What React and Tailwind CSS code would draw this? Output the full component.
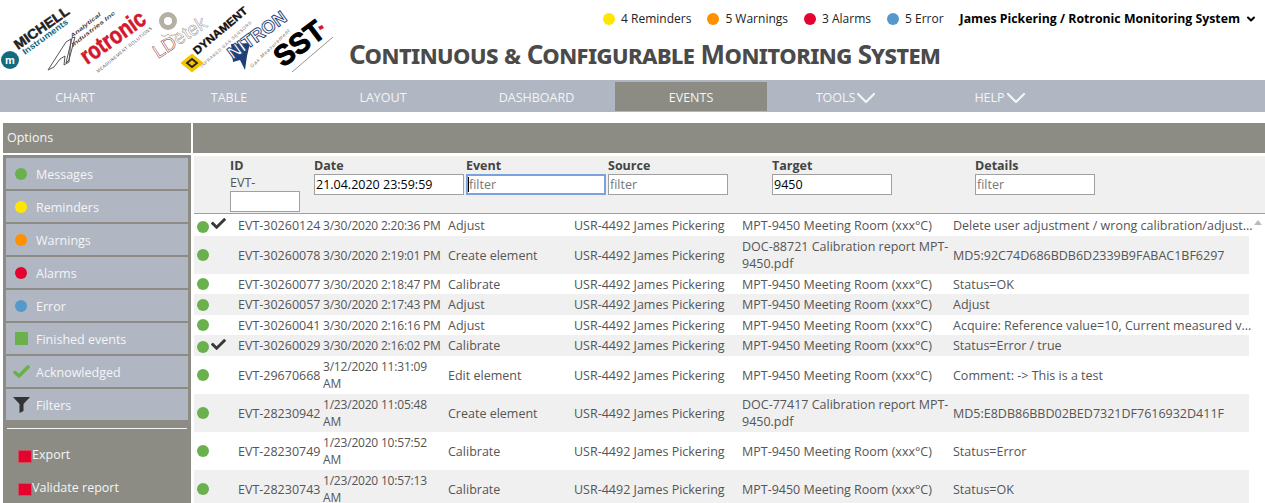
import { FaCheck } from 'react-icons/fa';
import { ChevronDown } from 'lucide-react';

const font = { fontFamily: 'Liberation Sans, sans-serif' };

const Logos = () => (
  <svg width="345" height="80" viewBox="0 0 345 80" className="shrink-0" style={font}>
    {/* Michell */}
    <circle cx="10" cy="60" r="9" fill="#136b80" />
    <text x="5" y="64" fontSize="11" fontWeight="700" fill="#fff">m</text>
    <text transform="translate(18 50) rotate(-35)" fontSize="13.5" fontWeight="900" fill="#222" stroke="#222" strokeWidth="0.5" textLength="64" lengthAdjust="spacingAndGlyphs">MICHELL</text>
    <text transform="translate(25 55) rotate(-36)" fontSize="8.5" fontWeight="700" fill="#136b80" textLength="54" lengthAdjust="spacingAndGlyphs">Instruments</text>
    {/* Analytical Industries */}
    <path d="M48 70 L66 42 L71 39 L69 62 L64 65 L65 56 L60 59 L54 67 Z M72 38 L75 37 L69 60 L66 63 Z" fill="#fff" stroke="#555" strokeWidth="1" />
    <text transform="translate(72 38) rotate(-38)" fontSize="5.5" fontWeight="700" fontStyle="italic" fill="#444" textLength="37" lengthAdjust="spacingAndGlyphs">Analytical</text>
    <text transform="translate(73 47) rotate(-38)" fontSize="5.5" fontWeight="700" fontStyle="italic" fill="#444" textLength="54" lengthAdjust="spacingAndGlyphs">Industries Inc</text>
    {/* Rotronic */}
    <text transform="translate(87 65) rotate(-35)" fontSize="24" fontWeight="700" fill="#d3172e" stroke="#d3172e" strokeWidth="0.6" textLength="74" lengthAdjust="spacingAndGlyphs">rotronic</text>
    <text transform="translate(98 73) rotate(-39)" fontSize="4.5" fill="#555" textLength="70" lengthAdjust="spacing">MEASUREMENT SOLUTIONS</text>
    {/* LDetek */}
    <circle cx="168" cy="21" r="6.5" fill="none" stroke="#b5b0a4" strokeWidth="5" />
    <path d="M161 35 q4 3 7 -1 q2 3 5 1 q3 1 5 -3" fill="none" stroke="#b5b0a4" strokeWidth="1" />
    <text transform="translate(158 59) rotate(-33)" fontSize="19" fill="none" strokeWidth="0.5" textLength="60" lengthAdjust="spacingAndGlyphs">
      <tspan stroke="#8c2b3c">LD</tspan>
      <tspan stroke="#999">etek</tspan>
    </text>
    {/* Dynament */}
    <path d="M181 63 L192 54 L203 63 L192 72 Z" fill="#f5c400" stroke="#f5c400" />
    <path d="M187 63 L192 59 L197 63 L192 67 Z" fill="none" stroke="#222" strokeWidth="1.8" />
    <text transform="translate(197 55) rotate(-40)" fontSize="11" fontWeight="700" fill="#111" stroke="#111" strokeWidth="0.35" textLength="67" lengthAdjust="spacingAndGlyphs">DYNAMENT</text>
    <text transform="translate(202 68) rotate(-42)" fontSize="4.5" fill="#777" textLength="67" lengthAdjust="spacing">INFRARED GAS SENSORS</text>
    {/* Nitron */}
    <path d="M231 44 L250 43 L247 56 L245 70 L240 60 L233 62 Z" fill="#1e3f78" />
    <text transform="translate(233 60) rotate(-36)" fontSize="18" fontWeight="700" fill="#fff" stroke="#1e3f78" strokeWidth="0.9" textLength="68" lengthAdjust="spacingAndGlyphs">NITRON</text>
    <text transform="translate(252 68) rotate(-44)" fontSize="5" fontStyle="italic" fill="#666" textLength="53" lengthAdjust="spacing">Gas Measurement</text>
    {/* SST */}
    <text transform="translate(283 68) rotate(-37)" fontSize="29" fontWeight="900" fill="#000" stroke="#000" strokeWidth="1" textLength="55" lengthAdjust="spacingAndGlyphs">SST</text>
    <path d="M318 27 L322 25 L324 28 L320 30 Z" fill="#d3172e" />
    <path d="M292 72 L333 37" stroke="#777" strokeWidth="0.8" />
  </svg>
);

const Dot = ({ color, className = '' }) => (
  <span className={`inline-block w-3 h-3 rounded-full shrink-0 ${color} ${className}`} />
);

const Status = ({ color, label }) => (
  <div className="flex items-center gap-[6px]">
    <Dot color={color} />
    <span>{label}</span>
  </div>
);

const NavItem = ({ label, width, active, menu }) => (
  <div
    className={`flex items-center justify-center pt-[3px] h-[29px] text-[12.5px] text-[#f4f5f6] ${width} ${active ? 'bg-[#8c8c84]' : ''}`}
  >
    {label}
    {menu && <ChevronDown size={32} strokeWidth={1.6} className="-my-2 -ml-[5px] -mr-2" />}
  </div>
);

const SideButton = ({ icon, label }) => (
  <div className="flex items-center h-[31px] bg-[#b0b7c3] text-[12.5px] text-[#f4f5f6] mb-[2px]">
    <span className="flex justify-center w-[30px] shrink-0 pl-[6px] pr-[6px]">{icon}</span>
    <span className="pt-[3px]">{label}</span>
  </div>
);

const SideLink = ({ label }) => (
  <div className="flex items-center h-[33px] pl-[12px] text-[12.5px] text-[#f4f5f6]">
    <span className="w-[14px] h-[13px] bg-[#e4032e] border border-[#c9545f] mt-1 shrink-0" />
    <span className="pt-[1px]">{label}</span>
  </div>
);

const FilterHead = ({ width, label, children }) => (
  <div className={`shrink-0 ${width}`}>
    <div className="text-[12.5px] font-bold text-[#444] leading-[16px]">{label}</div>
    {children}
  </div>
);

const FilterInput = ({ width, value, placeholder, focus, className = '' }) => (
  <div className={`relative ${width} ${className}`}>
    <input
      readOnly
      value={value}
      placeholder={placeholder}
      className={`block w-full h-[21px] px-[1px] text-[12.5px] text-black bg-white placeholder:text-[#777] outline-none ${
        focus ? 'border-2 border-[#7aa3de]' : 'border border-[#a0a0a0]'
      }`}
    />
    {focus && <span className="absolute left-[2px] top-[3px] w-px h-[15px] bg-black" />}
  </div>
);

const rows = [
  { h: 'h-[22px]', check: true, id: 'EVT-30260124', date: '3/30/2020 2:20:36 PM', event: 'Adjust', source: 'USR-4492 James Pickering', target: 'MPT-9450 Meeting Room (xxx°C)', details: 'Delete user adjustment / wrong calibration/adjust...' },
  { h: 'h-[38px]', id: 'EVT-30260078', date: '3/30/2020 2:19:01 PM', event: 'Create element', source: 'USR-4492 James Pickering', target: 'DOC-88721 Calibration report MPT-9450.pdf', details: 'MD5:92C74D686BDB6D2339B9FABAC1BF6297' },
  { h: 'h-[20px]', id: 'EVT-30260077', date: '3/30/2020 2:18:47 PM', event: 'Calibrate', source: 'USR-4492 James Pickering', target: 'MPT-9450 Meeting Room (xxx°C)', details: 'Status=OK' },
  { h: 'h-[21px]', id: 'EVT-30260057', date: '3/30/2020 2:17:43 PM', event: 'Adjust', source: 'USR-4492 James Pickering', target: 'MPT-9450 Meeting Room (xxx°C)', details: 'Adjust' },
  { h: 'h-[20px]', id: 'EVT-30260041', date: '3/30/2020 2:16:16 PM', event: 'Adjust', source: 'USR-4492 James Pickering', target: 'MPT-9450 Meeting Room (xxx°C)', details: 'Acquire: Reference value=10, Current measured v...' },
  { h: 'h-[21px]', check: true, id: 'EVT-30260029', date: '3/30/2020 2:16:02 PM', event: 'Calibrate', source: 'USR-4492 James Pickering', target: 'MPT-9450 Meeting Room (xxx°C)', details: 'Status=Error / true' },
  { h: 'h-[38px]', id: 'EVT-29670668', date: '3/12/2020 11:31:09 AM', event: 'Edit element', source: 'USR-4492 James Pickering', target: 'MPT-9450 Meeting Room (xxx°C)', details: 'Comment: -> This is a test' },
  { h: 'h-[38px]', id: 'EVT-28230942', date: '1/23/2020 11:05:48 AM', event: 'Create element', source: 'USR-4492 James Pickering', target: 'DOC-77417 Calibration report MPT-9450.pdf', details: 'MD5:E8DB86BBD02BED7321DF7616932D411F' },
  { h: 'h-[38px]', id: 'EVT-28230749', date: '1/23/2020 10:57:52 AM', event: 'Calibrate', source: 'USR-4492 James Pickering', target: 'MPT-9450 Meeting Room (xxx°C)', details: 'Status=Error' },
  { h: 'h-[38px]', id: 'EVT-28230743', date: '1/23/2020 10:57:13 AM', event: 'Calibrate', source: 'USR-4492 James Pickering', target: 'MPT-9450 Meeting Room (xxx°C)', details: 'Status=OK' },
];

const Row = ({ row, index }) => (
  <div
    className={`flex items-center w-[1055px] shrink-0 text-[12.5px] leading-[17px] text-[#555] ${row.h} ${
      index % 2 ? 'bg-[#f0f0f0]' : 'bg-white'
    }`}
  >
    <div className="flex w-[44px] shrink-0 pl-[3px] items-center">
      <Dot color="bg-[#6ab04c]" className={row.check ? 'mt-[3px]' : ''} />
      {row.check && <FaCheck size={15} className="text-[#3c3838] ml-[2px] -mt-[3px]" />}
    </div>
    <div className="w-[85px] shrink-0">{row.id}</div>
    <div className="w-[125px] shrink-0 pr-[2px] text-[12px] tracking-[-0.2px]">{row.date}</div>
    <div className="w-[126px] shrink-0">{row.event}</div>
    <div className="w-[168px] shrink-0">{row.source}</div>
    <div className="w-[211px] shrink-0">{row.target}</div>
    <div className="flex-1 whitespace-nowrap">{row.details}</div>
  </div>
);

const App = () => (
  <div className="h-[503px] w-[1265px] overflow-hidden bg-white" style={{ fontFamily: '"Open Sans", sans-serif' }}>
    {/* Header */}
    <div className="flex h-[80px]">
      <Logos />
      <div className="flex-1 flex flex-col">
        <div className="flex items-center justify-end h-[38px] gap-[16px] pr-[8px] text-[12px] text-[#222]">
          <Status color="bg-[#ffe600]" label="4 Reminders" />
          <Status color="bg-[#ff9000]" label="5 Warnings" />
          <Status color="bg-[#e4032e]" label="3 Alarms" />
          <Status color="bg-[#5598cc]" label="5 Error" />
          <div className="flex items-center font-bold text-black text-[12.3px] gap-[5px]">
            James Pickering / Rotronic Monitoring System
            <ChevronDown size={12} strokeWidth={4} />
          </div>
        </div>
        <div className="pl-[4px] text-[26px] leading-[32px] font-bold text-[#4a4a4a] tracking-[-0.55px] [font-variant-caps:small-caps] whitespace-nowrap" style={{ fontFamily: '"Noto Sans", sans-serif' }}>
          Continuous &amp; Configurable Monitoring System
        </div>
      </div>
    </div>

    {/* Nav */}
    <div className="flex items-start h-[32px] pt-[2px] bg-[#b0b7c3]">
      <div className="w-[150px] flex justify-center"><NavItem label="CHART" /></div>
      <div className="w-[158px] flex justify-center"><NavItem label="TABLE" /></div>
      <div className="w-[150px] flex justify-center"><NavItem label="LAYOUT" /></div>
      <div className="w-[157px] flex justify-center"><NavItem label="DASHBOARD" /></div>
      <NavItem label="EVENTS" width="w-[152px]" active />
      <div className="w-[156px] flex justify-center"><NavItem label="TOOLS" menu /></div>
      <div className="w-[152px] flex justify-center"><NavItem label="HELP" menu /></div>
    </div>

    {/* Body */}
    <div className="flex pt-[11px] pl-[3px] gap-[2px] h-[391px]">
      {/* Sidebar */}
      <div className="w-[188px] shrink-0 flex flex-col gap-[2px]">
        <div className="flex items-center h-[30px] shrink-0 pl-[4px] pt-[1px] bg-[#8c8c84] text-[12.5px] text-[#f4f5f6]">Options</div>
        <div className="flex-1 bg-[#8c8c84] px-[3px] pt-[3px]">
          <SideButton icon={<Dot color="bg-[#6ab04c]" />} label="Messages" />
          <SideButton icon={<Dot color="bg-[#ffe600]" />} label="Reminders" />
          <SideButton icon={<Dot color="bg-[#ff9000]" />} label="Warnings" />
          <SideButton icon={<Dot color="bg-[#e4032e]" />} label="Alarms" />
          <SideButton icon={<Dot color="bg-[#5598cc]" />} label="Error" />
          <SideButton icon={<span className="block w-[13px] h-[13px] bg-[#6ab04c]" />} label="Finished events" />
          <SideButton
            icon={
              <svg width="17" height="13" viewBox="0 0 17 13" className="shrink-0">
                <path d="M2 7.5 L6 11 L15 2" fill="none" stroke="#6ab04c" strokeWidth="3.6" strokeLinecap="round" strokeLinejoin="round" />
              </svg>
            }
            label="Acknowledged"
          />
          <SideButton
            icon={
              <svg width="17" height="16" viewBox="0 0 17 16" className="shrink-0">
                <path d="M0 0 H17 L10.5 7 V14 L6.5 16 V7 Z" fill="#333" />
              </svg>
            }
            label="Filters"
          />
          <div className="border-t border-[#f4f5f6] mx-[1px] mt-[8px] mb-[9px]" />
          <SideLink label="Export" />
          <SideLink label="Validate report" />
        </div>
      </div>

      {/* Main */}
      <div className="flex-1 flex flex-col gap-[2px] min-w-0">
        <div className="h-[30px] bg-[#8c8c84] shrink-0" />
        <div className="flex-1 min-h-0 pl-[1px] pt-[1px]">
          <div className="flex h-[58px] pl-[36px] pt-[2px] bg-[#f0f0f0] border-b border-[#a0a0a0]">
            <FilterHead width="w-[84px]" label="ID">
              <div className="text-[12.5px] leading-[18px] text-[#555]">EVT-</div>
              <FilterInput width="w-[70px]" value="" className="-mt-[1px]" />
            </FilterHead>
            <FilterHead width="w-[152px]" label="Date">
              <FilterInput width="w-[150px]" value="21.04.2020 23:59:59" />
            </FilterHead>
            <FilterHead width="w-[142px]" label="Event">
              <FilterInput width="w-[140px]" value="" placeholder="filter" focus />
            </FilterHead>
            <FilterHead width="w-[164px]" label="Source">
              <FilterInput width="w-[120px]" value="" placeholder="filter" />
            </FilterHead>
            <FilterHead width="w-[203px]" label="Target">
              <FilterInput width="w-[120px]" value="9450" />
            </FilterHead>
            <FilterHead width="w-[120px]" label="Details">
              <FilterInput width="w-[120px]" value="" placeholder="filter" />
            </FilterHead>
          </div>
          <div className="relative flex flex-col h-[290px] overflow-hidden">
            {rows.map((row, index) => (
              <Row key={row.id} row={row} index={index} />
            ))}
            <span className="absolute right-[3px] top-[6px] w-0 h-0 border-x-[4px] border-x-transparent border-b-[5px] border-b-[#bbb]" />
          </div>
        </div>
      </div>
    </div>
  </div>
);

export default App;
